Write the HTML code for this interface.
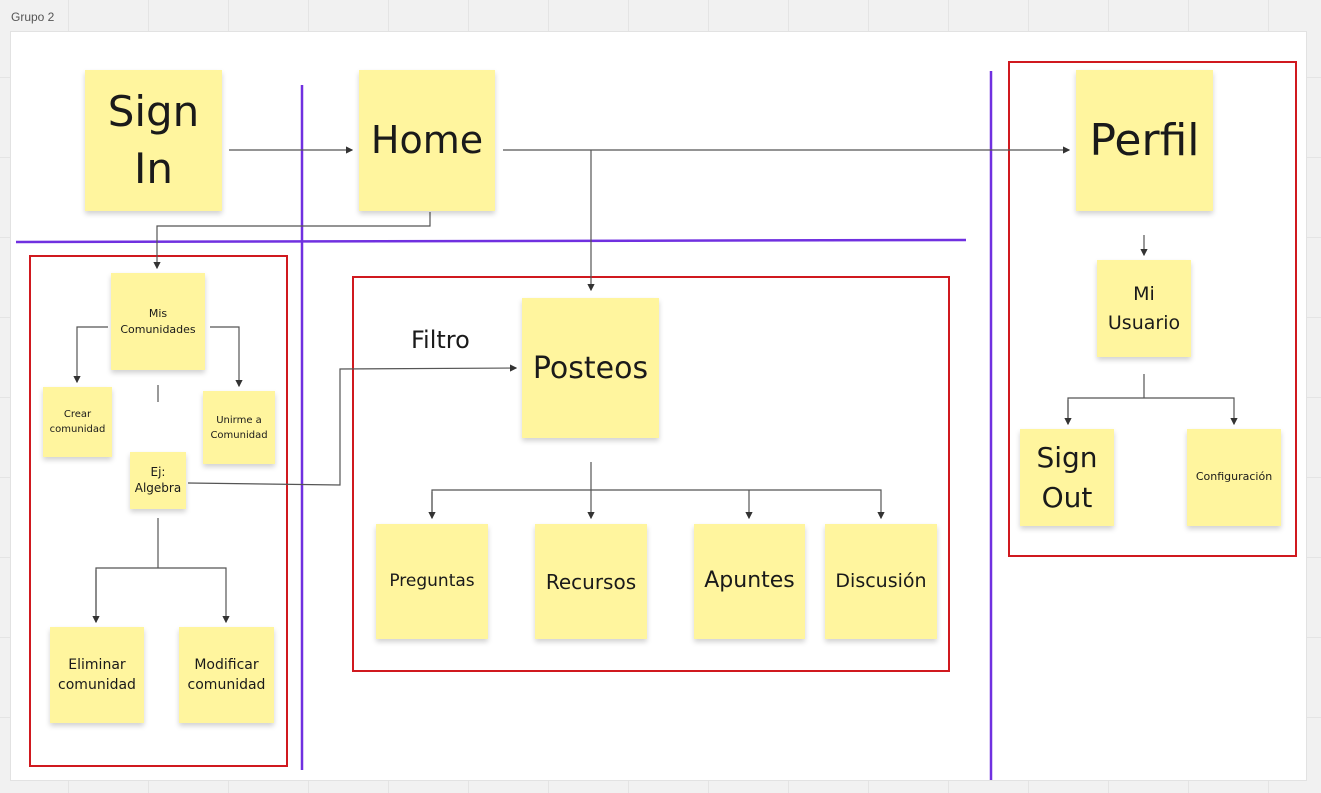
<!DOCTYPE html><html><head><meta charset="utf-8"><style>
body{margin:0;width:1321px;height:793px;overflow:hidden;background:#f1f1f1;font-family:"Liberation Sans","DejaVu Sans",sans-serif;position:relative;
background-image:linear-gradient(#e4e4e4 1px,transparent 1px),linear-gradient(90deg,#e4e4e4 1px,transparent 1px);background-size:80px 80px;background-position:-12px -3px}
.board{position:absolute;left:10px;top:31px;width:1297px;height:750px;background:#fff;border:1px solid #e2e2e2;box-sizing:border-box}
.s{position:absolute;background:#fff59e;box-shadow:0 3px 5px rgba(0,0,0,.18);display:flex;align-items:center;justify-content:center;text-align:center;color:#1a1a1a;line-height:1.3;font-family:"DejaVu Sans","Liberation Sans",sans-serif}
.r{position:absolute;border:2px solid #d0191f;box-sizing:border-box}
svg{position:absolute;left:0;top:0}
</style></head><body>
<div style="position:absolute;left:11px;top:10px;font-size:12px;color:#555">Grupo 2</div>
<div class="board"></div>
<div class="r" style="left:29px;top:255px;width:259px;height:512px"></div>
<div class="r" style="left:352px;top:276px;width:598px;height:396px"></div>
<div class="r" style="left:1008px;top:61px;width:289px;height:496px"></div>
<svg width="1321" height="793" fill="none">
<defs><marker id="a" markerWidth="6" markerHeight="6" refX="5" refY="3" orient="auto"><path d="M0,0L6,3L0,6z" fill="#333"/></marker></defs>
<g stroke="#7030e0" stroke-width="2.5"><line x1="302" y1="85" x2="302" y2="770"/><line x1="16" y1="242" x2="966" y2="240"/><line x1="991" y1="71" x2="991" y2="780"/></g>
<g stroke="#555" stroke-width="1.2">
<line x1="229" y1="150" x2="352" y2="150" marker-end="url(#a)"/>
<line x1="503" y1="150" x2="1069" y2="150" marker-end="url(#a)"/>
<polyline points="591,150 591,290" marker-end="url(#a)"/>
<polyline points="430,212 430,226 157,226 157,268" marker-end="url(#a)"/>
<polyline points="108,327 77,327 77,382" marker-end="url(#a)"/>
<polyline points="210,327 239,327 239,386" marker-end="url(#a)"/>
<line x1="158" y1="385" x2="158" y2="402"/>
<polyline points="188,483 340,485 340,369 516,368" marker-end="url(#a)"/>
<polyline points="158,518 158,568"/>
<polyline points="96,622 96,568 226,568 226,622" marker-end="url(#a)"/>
<line x1="96" y1="570" x2="96" y2="622" marker-end="url(#a)"/>
<polyline points="591,462 591,490"/>
<polyline points="432,518 432,490 881,490 881,518" marker-end="url(#a)"/>
<line x1="432" y1="492" x2="432" y2="518" marker-end="url(#a)"/>
<line x1="591" y1="490" x2="591" y2="518" marker-end="url(#a)"/>
<line x1="749" y1="490" x2="749" y2="518" marker-end="url(#a)"/>
<line x1="1144" y1="235" x2="1144" y2="255" marker-end="url(#a)"/>
<polyline points="1144,374 1144,398"/>
<polyline points="1068,424 1068,398 1234,398 1234,424" marker-end="url(#a)"/>
<line x1="1068" y1="400" x2="1068" y2="424" marker-end="url(#a)"/>
</g></svg>
<div class="s" style="left:85px;top:70px;width:137px;height:141px;font-size:42px;line-height:1.35">Sign<br>In</div>
<div class="s" style="left:359px;top:70px;width:136px;height:141px;font-size:38px">Home</div>
<div class="s" style="left:1076px;top:70px;width:137px;height:141px;font-size:44px">Perfil</div>
<div class="s" style="left:111px;top:273px;width:94px;height:97px;font-size:11px;line-height:1.4">Mis<br>Comunidades</div>
<div class="s" style="left:43px;top:387px;width:69px;height:70px;font-size:10px;line-height:1.5">Crear<br>comunidad</div>
<div class="s" style="left:203px;top:391px;width:72px;height:73px;font-size:10px;line-height:1.5">Unirme a<br>Comunidad</div>
<div class="s" style="left:130px;top:452px;width:56px;height:57px;font-size:12px">Ej:<br>Algebra</div>
<div class="s" style="left:50px;top:627px;width:94px;height:96px;font-size:14px;line-height:1.45">Eliminar<br>comunidad</div>
<div class="s" style="left:179px;top:627px;width:95px;height:96px;font-size:14px;line-height:1.45">Modificar<br>comunidad</div>
<div class="s" style="left:522px;top:298px;width:137px;height:140px;font-size:30px">Posteos</div>
<div class="s" style="left:376px;top:524px;width:112px;height:115px;font-size:17px">Preguntas</div>
<div class="s" style="left:535px;top:524px;width:112px;height:115px;font-size:20px">Recursos</div>
<div class="s" style="left:694px;top:524px;width:111px;height:115px;font-size:22px">Apuntes</div>
<div class="s" style="left:825px;top:524px;width:112px;height:115px;font-size:19px">Discusión</div>
<div class="s" style="left:1097px;top:260px;width:94px;height:97px;font-size:19px;line-height:1.5">Mi<br>Usuario</div>
<div class="s" style="left:1020px;top:429px;width:94px;height:97px;font-size:28px;line-height:1.4">Sign<br>Out</div>
<div class="s" style="left:1187px;top:429px;width:94px;height:97px;font-size:11px">Configuración</div>
<div style="position:absolute;left:411px;top:326px;font-size:24px;font-family:'DejaVu Sans',sans-serif;color:#1a1a1a">Filtro</div>
</body></html>
